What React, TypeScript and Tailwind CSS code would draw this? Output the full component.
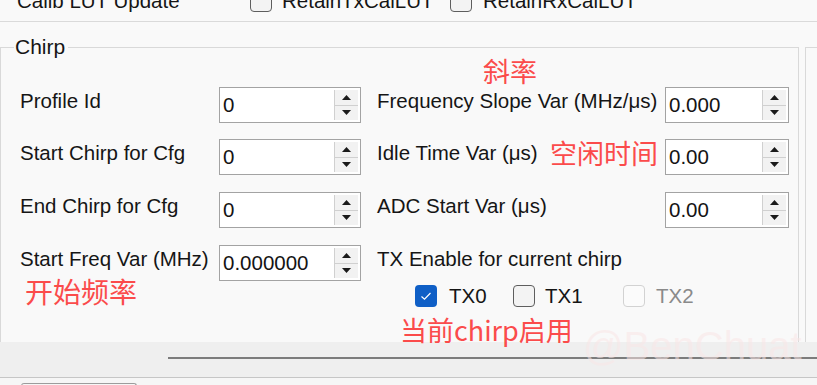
import React from "react";

function Arrow({ down }: { down?: boolean }) {
  return (
    <svg width="9" height="5" viewBox="0 0 9 5">
      <polygon points={down ? "0,0 9,0 4.5,5" : "0,5 4.5,0 9,5"} fill="#1a1a1a" />
    </svg>
  );
}

function Spin({ value, width }: { value: string; width: string }) {
  return (
    <div className={`flex h-[36px] ${width} border border-[#a3a3a3] bg-white`}>
      <div className="flex flex-1 items-center pl-[3px] text-[20.5px] leading-none text-[#141414]">
        {value}
      </div>
      <div className="my-[2px] mr-[2px] flex w-[24px] flex-col border-l border-[#d0d0d0]">
        <div className="flex flex-1 items-center justify-center border-b border-[#d0d0d0] bg-[#f2f2f2]">
          <Arrow />
        </div>
        <div className="flex flex-1 items-center justify-center bg-[#f2f2f2]">
          <Arrow down />
        </div>
      </div>
    </div>
  );
}

function Box({ kind }: { kind: "checked" | "empty" | "disabled" }) {
  if (kind === "checked") {
    return (
      <div className="flex h-[22px] w-[22px] items-center justify-center rounded-[4px] bg-[#0f5fc6]">
        <svg width="14" height="12" viewBox="0 0 14 12">
          <polyline points="2.5,6.5 5.5,9.2 11.5,3" fill="none" stroke="#ffffff" strokeWidth="1.2" />
        </svg>
      </div>
    );
  }
  if (kind === "disabled") {
    return <div className="h-[22px] w-[22px] rounded-[4px] border border-[#d2d2d2] bg-[#fbfbfb]" />;
  }
  return <div className="h-[22px] w-[22px] rounded-[4px] border-[1.5px] border-[#5e5e5e] bg-[#f3f3f3]" />;
}

function Row({
  left,
  leftValue,
  right,
  rightValue,
  mt,
}: {
  left: string;
  leftValue: string;
  right: string;
  rightValue?: string;
  mt: string;
}) {
  return (
    <div className={`flex items-start ${mt}`}>
      <div className="mt-[2px] w-[218px] pl-[19px] leading-[24px]">{left}</div>
      <Spin value={leftValue} width="w-[142px]" />
      <div className="ml-[16px] mt-[2px] w-[288px] leading-[24px]">{right}</div>
      {rightValue !== undefined && <Spin value={rightValue} width="w-[124px]" />}
    </div>
  );
}

export default function App() {
  return (
    <div className="relative h-[385px] w-[817px] overflow-hidden bg-[#f9f9f9] font-['Liberation_Sans',Arial,sans-serif] text-[20.5px] text-[#151515]">
      <div className="h-[342px] overflow-hidden">
        {/* top strip */}
        <div className="h-[22px] overflow-hidden border-b border-[#dadada]">
          <div className="mt-[-11px] flex h-[24px] items-center">
            <div className="w-[250px] pl-[17px] leading-[24px]">Calib LUT Update</div>
            <Box kind="empty" />
            <div className="ml-[10px] w-[168px] leading-[24px]">RetainTxCalLUT</div>
            <Box kind="empty" />
            <div className="ml-[11px] leading-[24px]">RetainRxCalLUT</div>
          </div>
        </div>

        <div className="mt-[13px] flex items-start">
          <fieldset className="h-[400px] w-[799px] border border-[#d9d9d9]">
            <legend className="ml-[13px] pl-[1px] pr-[3px] text-[21px] leading-[24px]">Chirp</legend>
            <div className="pt-[28px]">
              <Row mt="mt-0" left="Profile Id" leftValue="0" right="Frequency Slope Var (MHz/μs)" rightValue="0.000" />
              <Row mt="mt-[16px]" left="Start Chirp for Cfg" leftValue="0" right="Idle Time Var (μs)" rightValue="0.00" />
              <Row mt="mt-[17px]" left="End Chirp for Cfg" leftValue="0" right="ADC Start Var (μs)" rightValue="0.00" />
              <div className="mt-[17px] flex items-start">
                <div className="mt-[2px] w-[218px] pl-[19px] leading-[24px]">Start Freq Var (MHz)</div>
                <Spin value="0.000000" width="w-[142px]" />
                <div className="ml-[16px] mt-[2px] flex flex-col">
                  <div className="leading-[24px]">TX Enable for current chirp</div>
                  <div className="ml-[38px] mt-[13px] flex items-center">
                    <div className="flex w-[98px] items-center">
                      <Box kind="checked" />
                      <span className="ml-[12px] leading-[24px]">TX0</span>
                    </div>
                    <div className="flex w-[110px] items-center">
                      <Box kind="empty" />
                      <span className="ml-[10px] leading-[24px]">TX1</span>
                    </div>
                    <div className="flex items-center">
                      <Box kind="disabled" />
                      <span className="ml-[11px] leading-[24px] text-[#8a8a8a]">TX2</span>
                    </div>
                  </div>
                </div>
              </div>
            </div>
          </fieldset>
          <div className="ml-[6px] mt-[12px] h-[400px] flex-1 border-l border-t border-[#d9d9d9]" />
        </div>
      </div>

      {/* bottom splitter band */}
      <div className="h-[36px] border-b border-[#c6c6c6] bg-[#efefef] pt-[15px]">
        <div className="ml-[168px] h-[2px] bg-[#7c7c7c]" />
      </div>
      <div className="h-[7px] bg-[#f6f6f6] pt-[5px]">
        <div className="ml-[21px] h-[4px] w-[116px] rounded-t-[3px] border-x border-t border-[#9c9c9c]" />
      </div>

      {/* red annotations */}
      <div className="absolute left-[483px] top-[57px] font-['Noto_Sans_CJK_SC',sans-serif] text-[27px] leading-[27px] text-[#fb4b4b]">
        斜率
      </div>
      <div className="absolute left-[550px] top-[139px] font-['Noto_Sans_CJK_SC',sans-serif] text-[27px] leading-[27px] text-[#fb4b4b]">
        空闲时间
      </div>
      <div className="absolute left-[25px] top-[277px] font-['Noto_Sans_CJK_SC',sans-serif] text-[28px] leading-[28px] text-[#fb4b4b]">
        开始频率
      </div>
      <div className="absolute left-[400px] top-[316px] font-['Noto_Sans_CJK_SC',sans-serif] text-[27px] leading-[27px] text-[#fb4b4b]">
        当前chirp启用
      </div>

      {/* watermark */}
      <div className="absolute left-[583px] top-[326px] text-[40px] leading-[40px] text-[rgba(250,230,230,0.55)]">
        @BenChuat
      </div>
    </div>
  );
}
